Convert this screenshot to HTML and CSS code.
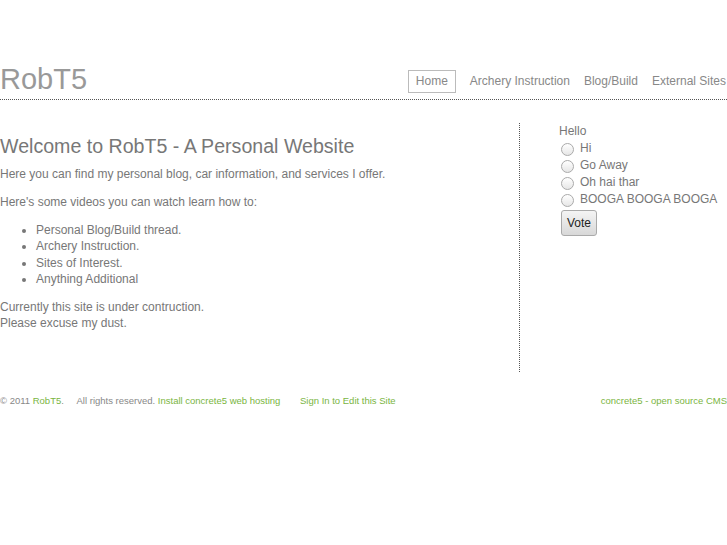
FILE: index.html
```html
<!DOCTYPE html>
<html>
<head>
<meta charset="utf-8">
<link rel="stylesheet" href="styles.css">
</head>
<body>
<div class="page">
  <header class="header">
    <h1 class="logo">RobT5</h1>
    <nav class="nav">
      <a class="nav-item active">Home</a>
      <a class="nav-item">Archery Instruction</a>
      <a class="nav-item">Blog/Build</a>
      <a class="nav-item">External Sites</a>
    </nav>
  </header>
  <div class="main">
    <div class="content">
      <h2 class="title">Welcome to RobT5 - A Personal Website</h2>
      <p>Here you can find my personal blog, car information, and services I offer.</p>
      <p>Here's some videos you can watch learn how to:</p>
      <ul class="list">
        <li>Personal Blog/Build thread.</li>
        <li>Archery Instruction.</li>
        <li>Sites of Interest.</li>
        <li>Anything Additional</li>
      </ul>
      <p>Currently this site is under contruction.<br>Please excuse my dust.</p>
    </div>
    <aside class="sidebar">
      <div class="poll-q">Hello</div>
      <label class="opt"><span class="radio"></span>Hi</label>
      <label class="opt"><span class="radio"></span>Go Away</label>
      <label class="opt"><span class="radio"></span>Oh hai thar</label>
      <label class="opt"><span class="radio"></span>BOOGA BOOGA BOOGA</label>
      <button class="vote">Vote</button>
    </aside>
  </div>
  <footer class="footer">
    <div class="foot-left">
      <span>&copy; 2011 <a class="green">RobT5</a>.</span>
      <span class="sp">All rights reserved.</span>
      <a class="green">Install concrete5 web hosting</a>
      <a class="green sign">Sign In to Edit this Site</a>
    </div>
    <div class="foot-right"><a class="green">concrete5 - open source CMS</a></div>
  </footer>
</div>
</body>
</html>
```
FILE: styles.css
```css
html, body {
  margin: 0;
  padding: 0;
  background: #fff;
}
body {
  font-family: "Liberation Sans", Arial, Helvetica, sans-serif;
  color: #777;
  font-size: 12px;
}
.page {
  width: 727px;
  padding-top: 58px;
}
.header {
  display: flex;
  justify-content: space-between;
  align-items: flex-end;
  height: 41px;
  border-bottom: 1px dotted #555;
}
.logo {
  margin: 0;
  font-weight: normal;
  font-size: 29px;
  color: #999;
  line-height: 34px;
  margin-bottom: 3px;
}
.nav {
  display: flex;
  align-items: center;
  margin-bottom: 6px;
}
.nav-item {
  color: #888;
  font-size: 12px;
  padding: 4px 6px;
  line-height: 13px;
  border: 1px solid transparent;
}
.nav-item:last-child {
  padding-right: 0;
}
.nav-item.active {
  border-color: #bbb;
  padding: 4px 7px;
  margin-right: 7px;
}
.main {
  display: flex;
  padding-top: 23px;
}
.content {
  width: 520px;
  box-sizing: border-box;
  border-right: 1px dotted #555;
  height: 249px;
}
.title {
  margin: 11px 0 8px;
  font-weight: normal;
  font-size: 19.6px;
  color: #777;
  line-height: 24px;
}
.content p {
  margin: 0 0 12px;
  line-height: 16px;
}
.list {
  margin: 0 0 12px;
  padding-left: 36px;
}
.list li {
  line-height: 16.3px;
}
.sidebar {
  padding-left: 39px;
  padding-top: 1px;
  display: flex;
  flex-direction: column;
  align-items: flex-start;
}
.poll-q {
  line-height: 14px;
  margin-bottom: 2px;
}
.opt {
  display: flex;
  align-items: center;
  line-height: 17px;
  height: 17px;
  padding-left: 2px;
}
.radio {
  width: 11px;
  height: 11px;
  border: 1px solid #aaa;
  border-radius: 50%;
  background: linear-gradient(#fff, #e6e6e6);
  margin-right: 6px;
  margin-top: 2px;
}
.vote {
  margin-top: 2px;
  margin-left: 2px;
  font-family: "Liberation Sans", Arial, sans-serif;
  font-size: 12px;
  color: #222;
  padding: 0 4px;
  height: 26px;
  width: 36px;
  border: 1px solid #aaa;
  border-radius: 3px;
  background: linear-gradient(#f4f4f4, #d8d8d8);
}
.footer {
  display: flex;
  justify-content: space-between;
  padding-top: 23px;
  font-size: 9.5px;
  color: #888;
  line-height: 12px;
}
.green {
  color: #7ab53f;
}
.sp {
  margin-left: 10px;
}
.sign {
  margin-left: 17px;
}
```
